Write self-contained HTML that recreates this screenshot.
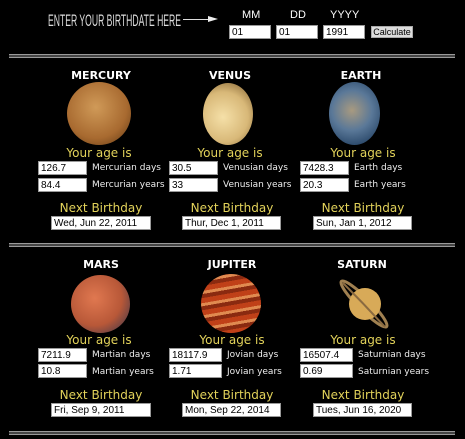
<!DOCTYPE html>
<html><head><style>
*{margin:0;padding:0;box-sizing:border-box}
body{width:465px;height:439px;background:#000;position:relative;overflow:hidden;font-family:"DejaVu Sans",Verdana,sans-serif;color:#fff}
.a{position:absolute;white-space:nowrap}
.in{position:absolute;background:#fff;border:1px solid #9a9a9a;color:#000;font:10px "Liberation Sans",Arial,sans-serif;padding:1px 2px;line-height:11px;height:14px}
.t{position:absolute;font:bold 11px "DejaVu Sans",sans-serif;text-align:center;width:120px}
.y{position:absolute;color:#e2d25a;font:12px "DejaVu Sans",sans-serif;text-align:center;width:120px}
.l{position:absolute;font:9px "DejaVu Sans",sans-serif;color:#eee}
.hr{position:absolute;left:9px;width:446px;height:4px;border-top:1px solid #999;border-bottom:1px solid #999;background:#444}
.p{position:absolute;border-radius:50%}
</style></head><body>
<svg class="a" style="left:48px;top:8px" width="134" height="22"><text x="0" y="18" textLength="133" lengthAdjust="spacingAndGlyphs" font-family="Liberation Sans" font-size="17" fill="#ddd">ENTER YOUR BIRTHDATE HERE</text></svg>
<div class="a" style="left:183px;top:19px;width:28px;height:1px;background:#ddd"></div>
<div class="a" style="left:208px;top:16px;width:0;height:0;border-left:10px solid #eee;border-top:3px solid transparent;border-bottom:3px solid transparent"></div>
<div class="a" style="left:242px;top:9px;font:11px 'Liberation Sans',sans-serif">MM</div>
<div class="a" style="left:290px;top:9px;font:11px 'Liberation Sans',sans-serif">DD</div>
<div class="a" style="left:330px;top:9px;font:11px 'Liberation Sans',sans-serif">YYYY</div>
<div class="in" style="left:229px;top:25px;width:42px">01</div>
<div class="in" style="left:276px;top:25px;width:42px">01</div>
<div class="in" style="left:323px;top:25px;width:42px">1991</div>
<div class="a" style="left:371px;top:26px;width:42px;height:12px;background:#ddd;border:1px solid #aaa;color:#000;font:9px 'Liberation Sans',sans-serif;text-align:center;line-height:10px">Calculate</div>
<div class="hr" style="top:54px"></div>

<div class="t" style="left:41px;top:69px">MERCURY</div>
<div class="t" style="left:170px;top:69px">VENUS</div>
<div class="t" style="left:301px;top:69px">EARTH</div>
<div class="p" style="left:67px;top:82px;width:64px;height:63px;background:radial-gradient(circle at 45% 40%,#d09a58,#a86a30 60%,#5a3410)"></div>
<div class="p" style="left:203px;top:83px;width:50px;height:62px;background:radial-gradient(circle at 40% 55%,#f5e0a8,#d8b878 55%,#8a6a38 90%)"></div>
<div class="p" style="left:329px;top:82px;width:51px;height:63px;background:radial-gradient(circle at 45% 45%,#a89a80,#5a7898 45%,#1e3c5e 90%)"></div>

<div class="y" style="left:39px;top:146px">Your age is</div>
<div class="y" style="left:170px;top:146px">Your age is</div>
<div class="y" style="left:303px;top:146px">Your age is</div>
<div class="in" style="left:38px;top:161px;width:49px">126.7</div><div class="l" style="left:92px;top:163px">Mercurian days</div>
<div class="in" style="left:38px;top:178px;width:49px">84.4</div><div class="l" style="left:92px;top:180px">Mercurian years</div>
<div class="in" style="left:169px;top:161px;width:49px">30.5</div><div class="l" style="left:223px;top:163px">Venusian days</div>
<div class="in" style="left:169px;top:178px;width:49px">33</div><div class="l" style="left:223px;top:180px">Venusian years</div>
<div class="in" style="left:300px;top:161px;width:49px">7428.3</div><div class="l" style="left:354px;top:163px">Earth days</div>
<div class="in" style="left:300px;top:178px;width:49px">20.3</div><div class="l" style="left:354px;top:180px">Earth years</div>
<div class="y" style="left:41px;top:201px">Next Birthday</div>
<div class="y" style="left:172px;top:201px">Next Birthday</div>
<div class="y" style="left:303px;top:201px">Next Birthday</div>
<div class="in" style="left:51px;top:216px;width:100px">Wed, Jun 22, 2011</div>
<div class="in" style="left:182px;top:216px;width:99px">Thur, Dec 1, 2011</div>
<div class="in" style="left:313px;top:216px;width:99px">Sun, Jan 1, 2012</div>

<div class="hr" style="top:243px"></div>

<div class="t" style="left:41px;top:258px">MARS</div>
<div class="t" style="left:172px;top:258px">JUPITER</div>
<div class="t" style="left:302px;top:258px">SATURN</div>
<div class="p" style="left:71px;top:275px;width:59px;height:58px;background:radial-gradient(circle at 40% 40%,#e07850,#b85838 55%,#4a3a48 90%)"></div>
<div class="p" style="left:201px;top:274px;width:60px;height:59px;background:repeating-linear-gradient(170deg,#c04018 0 5px,#e08a50 5px 8px,#8a2a10 8px 12px)"></div>
<div class="a" style="left:335px;top:275px;width:58px;height:58px">
<svg width="58" height="58"><ellipse cx="29" cy="29" rx="32" ry="6" transform="rotate(45 29 29)" fill="none" stroke="#a08050" stroke-width="3"/><circle cx="30" cy="29" r="16" fill="#d8aa58"/><path d="M8 8 Q30 30 50 52" stroke="#8a6a40" stroke-width="2" fill="none"/></svg></div>
<div class="y" style="left:39px;top:333px">Your age is</div>
<div class="y" style="left:172px;top:333px">Your age is</div>
<div class="y" style="left:303px;top:333px">Your age is</div>
<div class="in" style="left:38px;top:348px;width:49px">7211.9</div><div class="l" style="left:92px;top:350px">Martian days</div>
<div class="in" style="left:38px;top:364px;width:49px">10.8</div><div class="l" style="left:92px;top:367px">Martian years</div>
<div class="in" style="left:169px;top:348px;width:53px">18117.9</div><div class="l" style="left:227px;top:350px">Jovian days</div>
<div class="in" style="left:169px;top:364px;width:53px">1.71</div><div class="l" style="left:227px;top:367px">Jovian years</div>
<div class="in" style="left:300px;top:348px;width:53px">16507.4</div><div class="l" style="left:358px;top:350px">Saturnian days</div>
<div class="in" style="left:300px;top:364px;width:53px">0.69</div><div class="l" style="left:358px;top:367px">Saturnian years</div>
<div class="y" style="left:41px;top:388px">Next Birthday</div>
<div class="y" style="left:172px;top:388px">Next Birthday</div>
<div class="y" style="left:303px;top:388px">Next Birthday</div>
<div class="in" style="left:51px;top:403px;width:100px">Fri, Sep 9, 2011</div>
<div class="in" style="left:182px;top:403px;width:99px">Mon, Sep 22, 2014</div>
<div class="in" style="left:313px;top:403px;width:99px">Tues, Jun 16, 2020</div>
<div class="hr" style="top:431px"></div>
</body></html>
